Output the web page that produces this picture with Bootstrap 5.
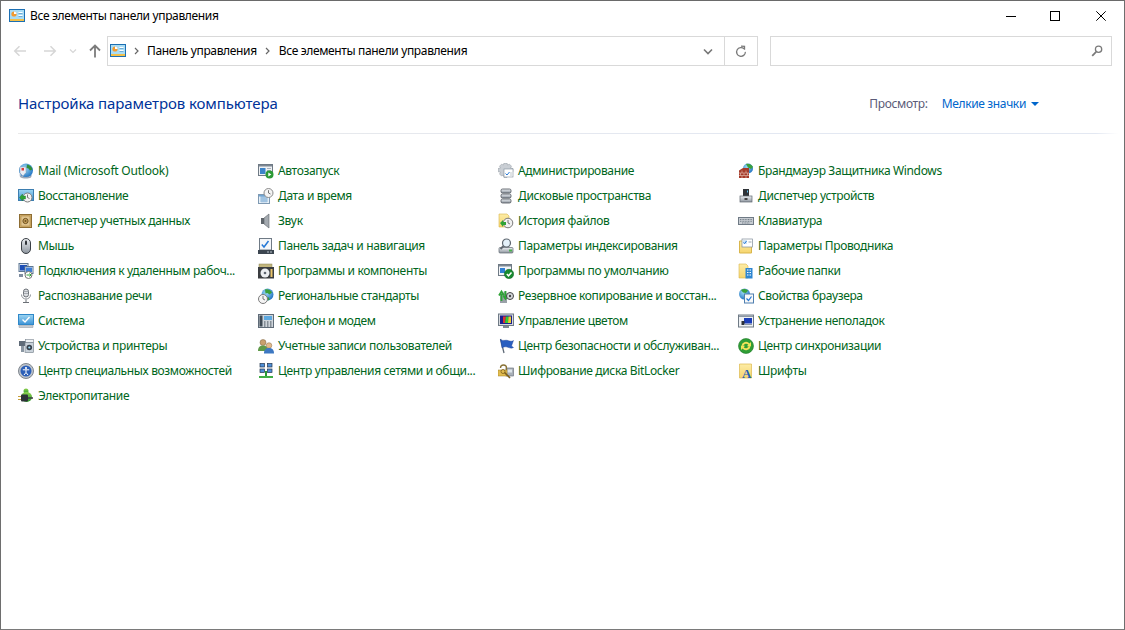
<!DOCTYPE html>
<html lang="ru">
<head>
<meta charset="utf-8">
<title>Все элементы панели управления</title>
<link href="https://cdn.jsdelivr.net/npm/bootstrap@5.3.0/dist/css/bootstrap.min.css" rel="stylesheet">
<style>
html,body{height:100%;margin:0;overflow:hidden;background:#fff}
body{font-family:"Noto Sans","Liberation Sans",sans-serif;font-size:12px;letter-spacing:-.35px;color:#000}
.cp-defs{width:0;height:0;display:block}
.cp-window{height:630px;border:1px solid #6e6e6e;border-top-color:#6a6a6a;border-bottom-color:#7a7a7a;background:#fff}
.cp-title{height:30px;padding-left:8px}
.cp-title-text{margin-left:5px}
.cp-winbtn{width:45px;height:30px;display:flex;align-items:center;justify-content:center}
.cp-winbtns{margin-right:1px}
.cp-winbtn-max{margin-right:1px;margin-left:-1px}
.cp-toolbar{height:30px;margin-top:5px;padding-right:12px}
.cp-nav{width:106px;flex:none}
.cp-navitem{display:flex;justify-content:center;flex:none}
.cp-nav-back{width:14px;margin-left:12px}
.cp-nav-fwd{width:14px;margin-left:16px}
.cp-nav-drop{width:8px;margin-left:12px}
.cp-nav-up{width:12px;margin-left:12px}
.cp-addr{width:651px;flex:none;border:1px solid #d9d9d9;height:30px}
.cp-addr-main{padding-left:2px}
.cp-crumb{margin:0 8px}
.cp-crumb-last{margin-left:9px}
.cp-addr-drop{width:32px;justify-content:center}
.cp-addr-refresh{width:33px;border-left:1px solid #d9d9d9;height:100%;justify-content:center}
.cp-search{width:342px;flex:none;margin-left:12px;border:1px solid #d9d9d9;height:30px;padding-right:7px}
.cp-head{padding:6px 0 0 17px;height:67px}
.cp-heading{font-size:15px;color:#003399;font-weight:400;margin:0;line-height:20px;letter-spacing:-.1px}
.cp-view{margin-left:auto;margin-right:85px;padding-top:3px}
.cp-view-label{color:#5b5b78;margin-right:14px}
.cp-view-link{color:#0066cc;text-decoration:none}
.cp-caret{width:0;height:0;border-left:4.5px solid transparent;border-right:4.5px solid transparent;border-top:4px solid #0066cc;margin-left:5px;margin-top:-1px}
.cp-rule{height:1px;margin:0 6px 0 17px;background:linear-gradient(90deg,#e9e9e9 0,#e3e8f2 70%,#e3e8f2 98%,#fff 100%)}
.cp-grid{display:grid;grid-template-columns:repeat(4,240px);grid-auto-rows:25px;padding:24px 0 0 17px}
.cp-item{display:flex;align-items:center;color:#006620;text-decoration:none;white-space:nowrap;height:25px}
.cp-item svg{width:16px;height:16px;flex:none;margin-right:4px}
.cp-latin{letter-spacing:-.22px}
</style>
</head>
<body>
<svg width="0" height="0" class="cp-defs" aria-hidden="true">
<defs>
<linearGradient id="gBlue" x1="0" y1="0" x2="0" y2="1"><stop offset="0" stop-color="#9ed6f2"/><stop offset="1" stop-color="#3d93d6"/></linearGradient>
<linearGradient id="gGrey" x1="0" y1="0" x2="0" y2="1"><stop offset="0" stop-color="#eceff3"/><stop offset="1" stop-color="#8d959e"/></linearGradient>
<linearGradient id="gFolder" x1="0" y1="0" x2="0" y2="1"><stop offset="0" stop-color="#fdeca6"/><stop offset="1" stop-color="#f6d56e"/></linearGradient>
<linearGradient id="gGreen" x1="0" y1="0" x2="0" y2="1"><stop offset="0" stop-color="#8fd14f"/><stop offset="1" stop-color="#2a9a2a"/></linearGradient>
<radialGradient id="gGlobe" cx=".4" cy=".35" r=".7"><stop offset="0" stop-color="#9fdcf5"/><stop offset="1" stop-color="#1d6fc0"/></radialGradient>
<symbol id="i-cp" viewBox="0 0 16 16"><rect x=".5" y="1.500" width="15" height="12" fill="#a9dcf4" stroke="#1c6fb3"/><rect x="1" y="11" width="14" height="2" fill="#f2c04a"/><circle cx="5" cy="6" r="2.600" fill="#f29a2e"/><path d="M5 6V3.400A2.600 2.600 0 0 1 7.600 6z" fill="#fff"/><path d="M9.500 4h4v1.500h-4zM9.500 7h4v1.500h-4z" fill="#fff"/><path d="M9.500 5.500h4M9.500 8.500h4" stroke="#2a7fc1" stroke-width=".6"/></symbol>
<symbol id="i-mail" viewBox="0 0 16 16"><circle cx="8" cy="7.500" r="7" fill="url(#gGlobe)"/><path d="M9 1.500c3 .5 5 2.500 5.500 5l-2.500 1-1.500-2-2-.5z" fill="#2f8f3a"/><path d="M2 4h6v5.500l-3 3.500-3-3z" fill="#e9eef5" stroke="#8a9bb3" stroke-width=".5"/><rect x="3.500" y="5" width="2.500" height="2.500" fill="#d83b3b"/><path d="M1.500 11c2 3.500 9 4 12.500 1l-1 2.500c-3 1.500-8 1.500-11-.5z" fill="#9aa7b8"/></symbol>
<symbol id="i-restore" viewBox="0 0 16 16"><rect x=".5" y="1.500" width="15" height="11" fill="url(#gBlue)" stroke="#3d7eb0"/><circle cx="9.500" cy="9.500" r="4.500" fill="#f2f2f2" stroke="#7a7a7a"/><path d="M9.500 9.500V6.500M9.500 9.500l2 1" stroke="#555" stroke-width=".8"/><path d="M1.500 9.500 4.500 6v2h3v3h-3v2z" fill="#2fa336" stroke="#1b7a23" stroke-width=".4"/></symbol>
<symbol id="i-cred" viewBox="0 0 16 16"><rect x="1.500" y="1.500" width="12" height="13" fill="#d0ad6a" stroke="#8e6d33"/><rect x="3" y="3" width="9" height="10" fill="#e1c58f" stroke="#a5813f" stroke-width=".5"/><circle cx="7.500" cy="8" r="2.600" fill="#c9a25a" stroke="#6e5122"/><circle cx="7.500" cy="8" r="1" fill="#6e5122"/></symbol>
<symbol id="i-mouse" viewBox="0 0 16 16"><rect x="3.500" y=".5" width="9" height="15" rx="4.500" fill="url(#gGrey)" stroke="#3a3f45"/><rect x="7" y="2.500" width="2" height="4.500" rx="1" fill="#2f3338"/></symbol>
<symbol id="i-rdp" viewBox="0 0 16 16"><rect x="1" y=".5" width="9" height="8" fill="#dfe7f2" stroke="#5d7692"/><rect x="2" y="2" width="7" height="5.500" fill="#1d4fb8"/><rect x="7" y="3.500" width="8" height="7" fill="#eef3f8" stroke="#5d7692"/><rect x="8" y="4.500" width="6" height="4.500" fill="#3f7fd6"/><circle cx="10.500" cy="12" r="3.500" fill="#fff" stroke="#777"/><path d="M8.500 12h4M11.500 10.500 13 12l-1.500 1.500" stroke="#2fa336" fill="none"/><path d="M1 11v3h4v-3z" fill="#7f8da0"/></symbol>
<symbol id="i-speech" viewBox="0 0 16 16"><rect x="5.500" y="1" width="5" height="8" rx="2.500" fill="#dcdfe3" stroke="#6b7076"/><path d="M5.500 3.500h5M5.500 5.500h5" stroke="#8d9298" stroke-width=".7"/><path d="M3.500 6.500c0 6 9 6 9 0" fill="none" stroke="#8d9298"/><path d="M8 11.500V14M5 14.500h6" stroke="#6b7076"/></symbol>
<symbol id="i-system" viewBox="0 0 16 16"><rect x=".5" y="1.500" width="15" height="10" fill="url(#gBlue)" stroke="#2f88c9"/><path d="M4.500 6.500 7 9l4.500-5" stroke="#fff" stroke-width="1.400" fill="none"/><rect x="1" y="12.500" width="14" height="2" fill="#c6ccd3" stroke="#8d959e" stroke-width=".5"/></symbol>
<symbol id="i-devices" viewBox="0 0 16 16"><rect x="1" y="3" width="7" height="5" fill="#5f6b78"/><rect x="3" y="8" width="3" height="6" fill="#8b97a3"/><rect x="7.500" y="1.500" width="8" height="3" fill="#eef1f4" stroke="#7d8792" stroke-width=".6"/><rect x="7" y="4.500" width="8.500" height="10" fill="#c9d2da" stroke="#6f7a85" stroke-width=".6"/><circle cx="11.300" cy="9.500" r="2.800" fill="#37414c"/><circle cx="11.300" cy="9.500" r="1.100" fill="#9fdcf5"/></symbol>
<symbol id="i-access" viewBox="0 0 16 16"><circle cx="8" cy="8" r="7.500" fill="#bfc5cc" stroke="#7f868e"/><circle cx="8" cy="8" r="5.500" fill="#2c60b8"/><circle cx="8" cy="5" r="1.100" fill="#fff"/><path d="M4.800 6.800h6.400M8 6.500v3M8 9.500l-2 2.500M8 9.500l2 2.500" stroke="#fff" stroke-width="1"/></symbol>
<symbol id="i-power" viewBox="0 0 16 16"><circle cx="8" cy="3" r="2.500" fill="url(#gGreen)"/><ellipse cx="8.500" cy="9" rx="5.500" ry="5" fill="url(#gGreen)"/><rect x="3" y="6.500" width="7" height="7" rx="1" fill="#2e3238"/><path d="M0 8.500h3M0 11.500h3" stroke="#c7a03a" stroke-width="1.200"/><path d="M10 10h5" stroke="#3a3f45" stroke-width="1.500"/></symbol>
<symbol id="i-autoplay" viewBox="0 0 16 16"><rect x=".5" y="1.500" width="14" height="11" fill="#eef1f4" stroke="#6f7a85"/><rect x="1" y="2" width="13" height="1.500" fill="#7d8792"/><rect x="2" y="5" width="5.500" height="6" fill="#3c84c9"/><path d="M9 5.500h4M9 7.500h4" stroke="#a7b0ba"/><circle cx="11.500" cy="11.500" r="4" fill="#2b9a35"/><path d="M10.300 9.500v4l3-2z" fill="#fff"/></symbol>
<symbol id="i-clock" viewBox="0 0 16 16"><rect x=".5" y="6.500" width="11" height="9" fill="#e7f0f8" stroke="#7f9ab3"/><path d="M2 9h8M2 11h8M2 13h8M4 8v6.500M6 8v6.500M8 8v6.500" stroke="#6fa4d1" stroke-width=".7"/><rect x="1" y="7" width="10" height="1.500" fill="#6fa4d1"/><circle cx="10.500" cy="5" r="4.500" fill="#f4f4f4" stroke="#8a8a8a"/><path d="M10.500 5V2.200M10.500 5l2 1" stroke="#555" stroke-width=".8"/></symbol>
<symbol id="i-sound" viewBox="0 0 16 16"><rect x="3" y="5" width="3.500" height="6" fill="#5f656b"/><path d="M6 5 11 1v14l-5-4z" fill="#a4aab0" stroke="#5f656b" stroke-width=".6"/></symbol>
<symbol id="i-taskbar" viewBox="0 0 16 16"><rect x="1.500" y=".5" width="12" height="11.500" fill="#f4f6f9" stroke="#6f7a85"/><path d="M3.800 6.500 6 9l4.500-6" stroke="#2578d6" stroke-width="1.500" fill="none"/><rect x="0" y="12" width="16" height="4" fill="#3c4650"/><path d="M9 14h2M12 14h2" stroke="#b8c2cc"/></symbol>
<symbol id="i-programs" viewBox="0 0 16 16"><rect x="1" y="1" width="13" height="4" fill="#c2b67d" stroke="#8c8458" stroke-width=".5"/><rect x="0" y="4" width="16" height="11.500" fill="#3a3d40"/><circle cx="7" cy="10" r="4.500" fill="#eceff2"/><circle cx="7" cy="10" r="1.300" fill="#5e6670"/><rect x="12.500" y="6" width="2" height="8" fill="#e9c46a"/></symbol>
<symbol id="i-region" viewBox="0 0 16 16"><circle cx="9.500" cy="6.500" r="6" fill="url(#gGlobe)"/><path d="M7 1.500c3-1 6 .5 7 3l-2.500 2-2-1.500-2 .5zM8 9l3 .5 .5 2.500-2 .5z" fill="#3aa03c"/><circle cx="5" cy="11" r="4.500" fill="#f4f4f4" stroke="#7a7a7a"/><path d="M5 11V8M5 11l2 1" stroke="#555" stroke-width=".8"/></symbol>
<symbol id="i-phone" viewBox="0 0 16 16"><rect x=".5" y="1.500" width="15" height="13" fill="#cfd5db" stroke="#5f6b78"/><rect x="1.500" y="2.500" width="3" height="11" fill="#3f4a55"/><rect x="6" y="3" width="8" height="4" fill="#5da9e0"/><path d="M6 9h1.500M9 9h1.500M12 9h1.500M6 11h1.500M9 11h1.500M12 11h1.500M6 13h1.500M9 13h1.500M12 13h1.500" stroke="#3f4a55"/></symbol>
<symbol id="i-users" viewBox="0 0 16 16"><circle cx="5" cy="4.500" r="3" fill="#c9a06d" stroke="#7a6240" stroke-width=".5"/><path d="M0 13c0-4 2-5.500 5-5.500s5 1.500 5 5.500z" fill="#5f9a48"/><circle cx="11" cy="7.500" r="2.800" fill="#e2b98a" stroke="#8a6c47" stroke-width=".5"/><path d="M6 15.500c0-4 2-5.500 5-5.500s5 1.500 5 5.500z" fill="#3d78c2"/></symbol>
<symbol id="i-network" viewBox="0 0 16 16"><g fill="#4f8fd6" stroke="#23364d" stroke-width=".7"><rect x="2" y=".5" width="4.500" height="3.500"/><rect x="9.500" y=".5" width="4.500" height="3.500"/><rect x="2" y="6" width="4.500" height="3.500"/><rect x="9.500" y="6" width="4.500" height="3.500"/></g><path d="M8 8v5" stroke="#2a9a35" stroke-width="2"/><rect x="1" y="13" width="14" height="2" fill="#3fae45"/></symbol>
<symbol id="i-admin" viewBox="0 0 16 16"><path d="M6 0h3l.5 2 2-.8 2 2-1 1.800 2.500.6v3l-2.500.6 1 1.800-2 2-2-1-.5 2.500H6l-.6-2.500-1.900 1-2-2 1-1.800L0 8.600v-3l2.500-.6-1-1.800 2-2 1.900.8z" fill="#c9ced4" stroke="#8f969e" stroke-width=".5"/><rect x="6" y="6" width="9" height="8" fill="#fff" stroke="#7f8c99" stroke-width=".6"/><path d="M7.500 10.500 9 12l2.500-3" stroke="#2578d6" fill="none"/><path d="M12 10h2M12 12h2" stroke="#a8b0b8" stroke-width=".7"/></symbol>
<symbol id="i-storage" viewBox="0 0 16 16"><rect x="3" y="1" width="10" height="4" rx="1.500" fill="url(#gGrey)" stroke="#4b5158" stroke-width=".8"/><rect x="3" y="6" width="10" height="4" rx="1.500" fill="url(#gGrey)" stroke="#4b5158" stroke-width=".8"/><rect x="3" y="11" width="10" height="4" rx="1.500" fill="url(#gGrey)" stroke="#4b5158" stroke-width=".8"/></symbol>
<symbol id="i-history" viewBox="0 0 16 16"><path d="M1 1h8l2 2v11H1z" fill="url(#gFolder)" stroke="#d9b64c" stroke-width=".6"/><circle cx="10" cy="10" r="4.800" fill="#f0f0f0" stroke="#7a7a7a"/><path d="M10 10V7M10 10l2 1" stroke="#555" stroke-width=".8"/><path d="M2 10l3-3v2h3v3H5v2z" fill="#2fa336"/></symbol>
<symbol id="i-index" viewBox="0 0 16 16"><rect x="1" y="9.500" width="14" height="5.500" rx="1" fill="url(#gGrey)" stroke="#5f6770" stroke-width=".7"/><rect x="11" y="11.500" width="3" height="2" fill="#49b04c"/><circle cx="8.500" cy="5" r="4" fill="#e4f1fa" stroke="#5f6770" stroke-width="1.200"/><path d="M5.500 8 2.500 11" stroke="#5f6770" stroke-width="2"/></symbol>
<symbol id="i-defaults" viewBox="0 0 16 16"><rect x=".5" y="1.500" width="13" height="11" fill="#f3f5f8" stroke="#6f7a85"/><rect x="1" y="2" width="12" height="1.500" fill="#7d8792"/><rect x="2" y="5" width="5" height="5" fill="#2f7fd3"/><circle cx="11" cy="11" r="4.700" fill="#178a2f" stroke="#0f5f20" stroke-width=".5"/><path d="M8.800 11 10.500 12.800 13.500 9.500" stroke="#fff" stroke-width="1.500" fill="none"/></symbol>
<symbol id="i-backup" viewBox="0 0 16 16"><path d="M2 15V4l3 2 1-3 3 3v9z" fill="#9aa1a8"/><path d="M3.500 13V6M1 7.500 3.500 3.500 6 7.500" stroke="#2fa336" stroke-width="1.800" fill="none"/><path d="M7.500 3v7M5.500 8l2 3 2-3" stroke="#2fa336" stroke-width="1.800" fill="none"/><circle cx="12" cy="8" r="3.500" fill="#d5d8dc" stroke="#444"/><circle cx="12" cy="8" r="1.200" fill="#444"/></symbol>
<symbol id="i-color" viewBox="0 0 16 16"><rect x=".5" y="1" width="15" height="11.500" fill="#d7dadf" stroke="#6f7a85"/><rect x="2" y="2.500" width="12" height="8.500" fill="#1b1f8f"/><path d="M5 3.500h3L7 10H5z" fill="#d33"/><path d="M8 3.500h2.500L10 10H7z" fill="#3c3"/><path d="M10.500 3.500H13V10h-3z" fill="#ec3"/><rect x="5" y="13" width="6" height="2" fill="#7d8792"/></symbol>
<symbol id="i-flag" viewBox="0 0 16 16"><path d="M2.500 1 6 15" stroke="#5f6b78" stroke-width="1.300"/><path d="M2.500 1.500c3 2 5 0 7.500 1s4 1 5.500 0L13.500 8l2 1.500c-2.500 1.500-4.500 0-6.500-.5s-3.500 0-5 1z" fill="#2a5fc0" stroke="#1b3f8f" stroke-width=".4"/></symbol>
<symbol id="i-bitlocker" viewBox="0 0 16 16"><rect x="8" y="5" width="7.500" height="8" fill="#a9b0b8" stroke="#5f6770" stroke-width=".6"/><rect x="9.500" y="6.500" width="4.500" height="3" fill="#dfe5ea"/><path d="M2.500 5a3 3 0 0 1 6 0v2" fill="none" stroke="#8a7336" stroke-width="1.300"/><rect x="0" y="7" width="9" height="6" fill="#e3bd4f" stroke="#9a7c26" stroke-width=".5"/><path d="M6 9 12 15" stroke="#7b5e1c" stroke-width="1.600"/><circle cx="5" cy="8.500" r="2" fill="#e3bd4f" stroke="#7b5e1c" stroke-width=".8"/></symbol>
<symbol id="i-firewall" viewBox="0 0 16 16"><circle cx="10" cy="5.500" r="5" fill="url(#gGlobe)"/><path d="M8 1c3-1 6 1 7 3l-2 2-3-1.500z" fill="#3aa03c"/><path d="M1 7.500 5 5h6v10H1z" fill="#a53a2a"/><path d="M1 10h10M1 12.500h10M4 7.500V10M8 7.500V10M2.500 10v2.500M6 10v2.500M9.500 10v2.500M4 12.500V15M8 12.500V15" stroke="#e8c6b8" stroke-width=".6"/></symbol>
<symbol id="i-device" viewBox="0 0 16 16"><rect x="5" y="1" width="6" height="7" fill="#2f3338"/><rect x="9" y="2.500" width="1" height="2" fill="#5ec0ee"/><rect x="2" y="8" width="12" height="6" fill="url(#gGrey)" stroke="#5f6770" stroke-width=".7"/><rect x="6.500" y="10" width="3" height="2" fill="#444"/></symbol>
<symbol id="i-keyboard" viewBox="0 0 16 16"><rect x=".5" y="4.500" width="15" height="7" fill="#c7ccd2" stroke="#6f7a85"/><path d="M2 6.500h12M2 8.300h12M4 10h8" stroke="#6f7a85" stroke-width=".9" stroke-dasharray="1 .6"/></symbol>
<symbol id="i-explorer" viewBox="0 0 16 16"><path d="M1.500 3h12v12h-12z" fill="url(#gFolder)" stroke="#d9b64c"/><rect x="4" y="1" width="10.500" height="8" fill="#fff" stroke="#7f8c99" stroke-width=".7"/><rect x="5" y="2" width="4" height="4" fill="#cfe4f6"/><path d="M5.500 4.500 6.700 5.500 8.500 3" stroke="#2578d6" fill="none"/><path d="M10.500 4h3" stroke="#9aa4ae"/></symbol>
<symbol id="i-work" viewBox="0 0 16 16"><path d="M1 1h7l2 2v12H1z" fill="url(#gFolder)" stroke="#d9b64c" stroke-width=".6"/><rect x="7.500" y="5" width="7" height="10.500" fill="#2e86d1"/><path d="M9 7h1.500M11.500 7H13M9 9.500h1.500M11.500 9.500H13M9 12h1.500M11.500 12H13" stroke="#fff" stroke-width="1.200"/></symbol>
<symbol id="i-inet" viewBox="0 0 16 16"><circle cx="6.500" cy="6" r="5.500" fill="url(#gGlobe)"/><path d="M3 2c2-1.500 5-1.500 7 .5L8 5 5 4.500z" fill="#3aa03c"/><rect x="6.500" y="6" width="9" height="9" fill="#f8f8f8" stroke="#4f7fb0"/><path d="M8.500 10.500 10.500 12.500 13.500 8.500" stroke="#2578d6" stroke-width="1.200" fill="none"/></symbol>
<symbol id="i-trouble" viewBox="0 0 16 16"><rect x=".5" y="2" width="15" height="12" fill="#eef1f4" stroke="#6f7a85"/><rect x="1" y="2.500" width="14" height="1.500" fill="#8d98a3"/><rect x="6" y="5" width="8" height="5.500" fill="#1a3db8"/><rect x="3.500" y="8" width="3" height="4" fill="#2b3138"/><path d="M6 11.500h8" stroke="#8d98a3"/></symbol>
<symbol id="i-sync" viewBox="0 0 16 16"><circle cx="8" cy="8" r="7.500" fill="#2f9e36" stroke="#1f7a28" stroke-width=".6"/><path d="M3.500 7.500a4.500 4.500 0 0 1 8-2L13 4v4.200H8.800l1.500-1.500a3 3 0 0 0-5 1zM12.500 8.500a4.500 4.500 0 0 1-8 2L3 12V7.800h4.200L5.700 9.300a3 3 0 0 0 5-1z" fill="#f3e35a"/></symbol>
<symbol id="i-fonts" viewBox="0 0 16 16"><path d="M1.500 1h12v14h-12z" fill="url(#gFolder)" stroke="#dcb94e" stroke-width=".7"/><text x="4" y="15" fill="#1f5fb5" font-family="Liberation Serif,serif" font-weight="700" font-size="13">A</text></symbol>
<symbol id="i-search" viewBox="0 0 16 16"><circle cx="9.800" cy="6" r="3.600" fill="none" stroke="#7a7a7a" stroke-width="1.500"/><path d="M7 9 2.500 13.500" stroke="#7a7a7a" stroke-width="2"/></symbol>
<symbol id="i-refresh" viewBox="0 0 16 16"><path d="M11.500 4.500A5 5 0 1 0 13 8" fill="none" stroke="#7a7a7a" stroke-width="1.500" transform="translate(0 1)"/><path d="M8 2.500l4 .2v4" fill="none" stroke="#7a7a7a" stroke-width="1.500"/></symbol>
</defs>
</svg>

<div class="cp-window d-flex flex-column">
  <div class="cp-title d-flex align-items-center">
    <svg width="16" height="16"><use href="#i-cp"/></svg>
    <span class="cp-title-text">Все элементы панели управления</span>
    <div class="cp-winbtns d-flex ms-auto">
      <div class="cp-winbtn"><svg width="10" height="10" viewBox="0 0 10 10"><path d="M0 5.500h10" stroke="#000"/></svg></div>
      <div class="cp-winbtn cp-winbtn-max"><svg width="10" height="10" viewBox="0 0 10 10"><rect x=".5" y=".5" width="9" height="9" fill="none" stroke="#000"/></svg></div>
      <div class="cp-winbtn"><svg width="10" height="10" viewBox="0 0 10 10"><path d="M.3.300l9.400 9.400M9.700.3.300 9.700" stroke="#000"/></svg></div>
    </div>
  </div>
  <div class="cp-toolbar d-flex align-items-center">
    <div class="cp-nav d-flex align-items-center">
      <div class="cp-navitem cp-nav-back"><svg width="14" height="12" viewBox="0 0 14 12"><path d="M13 6H2M6.500 1.200 1.700 6l4.800 4.800" fill="none" stroke="#d6d6d6" stroke-width="1.500"/></svg></div>
      <div class="cp-navitem cp-nav-fwd"><svg width="14" height="12" viewBox="0 0 14 12"><path d="M1 6h11M7.500 1.200 12.300 6l-4.800 4.800" fill="none" stroke="#d6d6d6" stroke-width="1.500"/></svg></div>
      <div class="cp-navitem cp-nav-drop"><svg width="8" height="6" viewBox="0 0 8 6"><path d="M1 1.500 4 4.500 7 1.500" fill="none" stroke="#d6d6d6" stroke-width="1.200"/></svg></div>
      <div class="cp-navitem cp-nav-up"><svg width="12" height="14" viewBox="0 0 12 14"><path d="M6 13.500V2M1 6.500 6 1.500l5 5" fill="none" stroke="#7c7c7c" stroke-width="1.800"/></svg></div>
    </div>
    <div class="cp-addr d-flex align-items-center">
      <div class="cp-addr-main d-flex align-items-center flex-grow-1">
        <svg width="16" height="16"><use href="#i-cp"/></svg>
        <svg class="ms-2" width="5" height="8" viewBox="0 0 5 8"><path d="M1 1l3 3-3 3" fill="none" stroke="#666" stroke-width="1.200"/></svg>
        <span class="cp-crumb">Панель управления</span>
        <svg width="5" height="8" viewBox="0 0 5 8"><path d="M1 1l3 3-3 3" fill="none" stroke="#666" stroke-width="1.200"/></svg>
        <span class="cp-crumb cp-crumb-last">Все элементы панели управления</span>
      </div>
      <div class="cp-addr-drop d-flex"><svg width="10" height="7" viewBox="0 0 10 7"><path d="M1 1.500 5 5.500 9 1.500" fill="none" stroke="#777" stroke-width="1.600"/></svg></div>
      <div class="cp-addr-refresh d-flex align-items-center"><svg width="14" height="14"><use href="#i-refresh"/></svg></div>
    </div>
    <div class="cp-search d-flex align-items-center justify-content-end"><svg width="14" height="14"><use href="#i-search"/></svg></div>
  </div>
  <div class="cp-head d-flex align-items-center">
    <h1 class="cp-heading">Настройка параметров компьютера</h1>
    <div class="cp-view d-flex align-items-center">
      <span class="cp-view-label">Просмотр:</span>
      <a class="cp-view-link d-flex align-items-center" href="#">Мелкие значки<span class="cp-caret"></span></a>
    </div>
  </div>
  <div class="cp-rule"></div>
  <div class="cp-grid">
    <a class="cp-item cp-latin" href="#"><svg><use href="#i-mail"/></svg>Mail (Microsoft Outlook)</a>
    <a class="cp-item" href="#"><svg><use href="#i-autoplay"/></svg>Автозапуск</a>
    <a class="cp-item" href="#"><svg><use href="#i-admin"/></svg>Администрирование</a>
    <a class="cp-item" href="#"><svg><use href="#i-firewall"/></svg>Брандмауэр Защитника Windows</a>
    <a class="cp-item" href="#"><svg><use href="#i-restore"/></svg>Восстановление</a>
    <a class="cp-item" href="#"><svg><use href="#i-clock"/></svg>Дата и время</a>
    <a class="cp-item" href="#"><svg><use href="#i-storage"/></svg>Дисковые пространства</a>
    <a class="cp-item" href="#"><svg><use href="#i-device"/></svg>Диспетчер устройств</a>
    <a class="cp-item" href="#"><svg><use href="#i-cred"/></svg>Диспетчер учетных данных</a>
    <a class="cp-item" href="#"><svg><use href="#i-sound"/></svg>Звук</a>
    <a class="cp-item" href="#"><svg><use href="#i-history"/></svg>История файлов</a>
    <a class="cp-item" href="#"><svg><use href="#i-keyboard"/></svg>Клавиатура</a>
    <a class="cp-item" href="#"><svg><use href="#i-mouse"/></svg>Мышь</a>
    <a class="cp-item" href="#"><svg><use href="#i-taskbar"/></svg>Панель задач и навигация</a>
    <a class="cp-item" href="#"><svg><use href="#i-index"/></svg>Параметры индексирования</a>
    <a class="cp-item" href="#"><svg><use href="#i-explorer"/></svg>Параметры Проводника</a>
    <a class="cp-item" href="#"><svg><use href="#i-rdp"/></svg>Подключения к удаленным рабоч...</a>
    <a class="cp-item" href="#"><svg><use href="#i-programs"/></svg>Программы и компоненты</a>
    <a class="cp-item" href="#"><svg><use href="#i-defaults"/></svg>Программы по умолчанию</a>
    <a class="cp-item" href="#"><svg><use href="#i-work"/></svg>Рабочие папки</a>
    <a class="cp-item" href="#"><svg><use href="#i-speech"/></svg>Распознавание речи</a>
    <a class="cp-item" href="#"><svg><use href="#i-region"/></svg>Региональные стандарты</a>
    <a class="cp-item" href="#"><svg><use href="#i-backup"/></svg>Резервное копирование и восстан...</a>
    <a class="cp-item" href="#"><svg><use href="#i-inet"/></svg>Свойства браузера</a>
    <a class="cp-item" href="#"><svg><use href="#i-system"/></svg>Система</a>
    <a class="cp-item" href="#"><svg><use href="#i-phone"/></svg>Телефон и модем</a>
    <a class="cp-item" href="#"><svg><use href="#i-color"/></svg>Управление цветом</a>
    <a class="cp-item" href="#"><svg><use href="#i-trouble"/></svg>Устранение неполадок</a>
    <a class="cp-item" href="#"><svg><use href="#i-devices"/></svg>Устройства и принтеры</a>
    <a class="cp-item" href="#"><svg><use href="#i-users"/></svg>Учетные записи пользователей</a>
    <a class="cp-item" href="#"><svg><use href="#i-flag"/></svg>Центр безопасности и обслуживан...</a>
    <a class="cp-item" href="#"><svg><use href="#i-sync"/></svg>Центр синхронизации</a>
    <a class="cp-item" href="#"><svg><use href="#i-access"/></svg>Центр специальных возможностей</a>
    <a class="cp-item" href="#"><svg><use href="#i-network"/></svg>Центр управления сетями и общи...</a>
    <a class="cp-item" href="#"><svg><use href="#i-bitlocker"/></svg>Шифрование диска BitLocker</a>
    <a class="cp-item" href="#"><svg><use href="#i-fonts"/></svg>Шрифты</a>
    <a class="cp-item" href="#"><svg><use href="#i-power"/></svg>Электропитание</a>
  </div>
</div>
<script src="https://cdn.jsdelivr.net/npm/bootstrap@5.3.0/dist/js/bootstrap.bundle.min.js"></script>
</body>
</html>
